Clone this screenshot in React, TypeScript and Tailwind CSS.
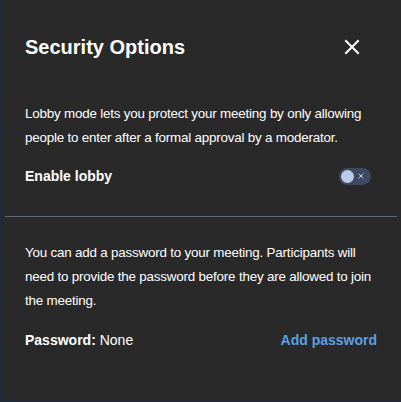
import { X } from "lucide-react";

function LobbyToggle() {
  return (
    <div className="flex h-[17px] w-[32px] items-center justify-between rounded-full bg-[#3d4a62] pl-[2px] pr-[6px]">
      <span className="h-[13px] w-[13px] rounded-full bg-[#b9cbe8]" />
      <X className="h-[8px] w-[8px] text-[#c5d2e6]" strokeWidth={3} />
    </div>
  );
}

export default function App() {
  return (
    <div
      className="flex h-[402px] w-[401px] flex-col border-b border-l border-[#1d2a44] bg-[#292929] text-white"
      style={{ fontFamily: '"Liberation Sans", Arial, sans-serif' }}
    >
      {/* Header */}
      <div className="mt-[33px] flex items-center justify-between pl-6 pr-[37px]">
        <h1 className="text-[20px] font-bold leading-[28px]">Security Options</h1>
        <button className="flex h-6 w-6 items-center justify-center text-white">
          <svg width="24" height="24" viewBox="0 0 24 24" fill="none">
            <path
              d="M6 6L18 18M18 6L6 18"
              stroke="currentColor"
              strokeWidth="2"
              strokeLinecap="square"
            />
          </svg>
        </button>
      </div>

      {/* Lobby */}
      <div className="mt-[41px] px-6 text-[14px] leading-[24px]">
        <p className="text-[13.4px] tracking-[-0.2px]">
          Lobby mode lets you protect your meeting by only allowing people to enter
          after a formal approval by a moderator.
        </p>
        <div className="mt-[14px] flex items-center justify-between pr-[6px]">
          <span className="font-bold">Enable lobby</span>
          <LobbyToggle />
        </div>
      </div>

      <div className="mx-1 mt-[28px] h-px bg-[#5d6a7b]" />

      {/* Password */}
      <div className="mt-[24px] px-6 text-[14px] leading-[24px]">
        <p className="text-[13.4px] tracking-[-0.2px]">
          You can add a password to your meeting. Participants will need to provide
          the password before they are allowed to join the meeting.
        </p>
        <div className="mt-[15px] flex items-center justify-between">
          <span>
            <span className="font-bold">Password:</span> None
          </span>
          <button className="font-bold text-[#5ba0e4]">Add password</button>
        </div>
      </div>
    </div>
  );
}
